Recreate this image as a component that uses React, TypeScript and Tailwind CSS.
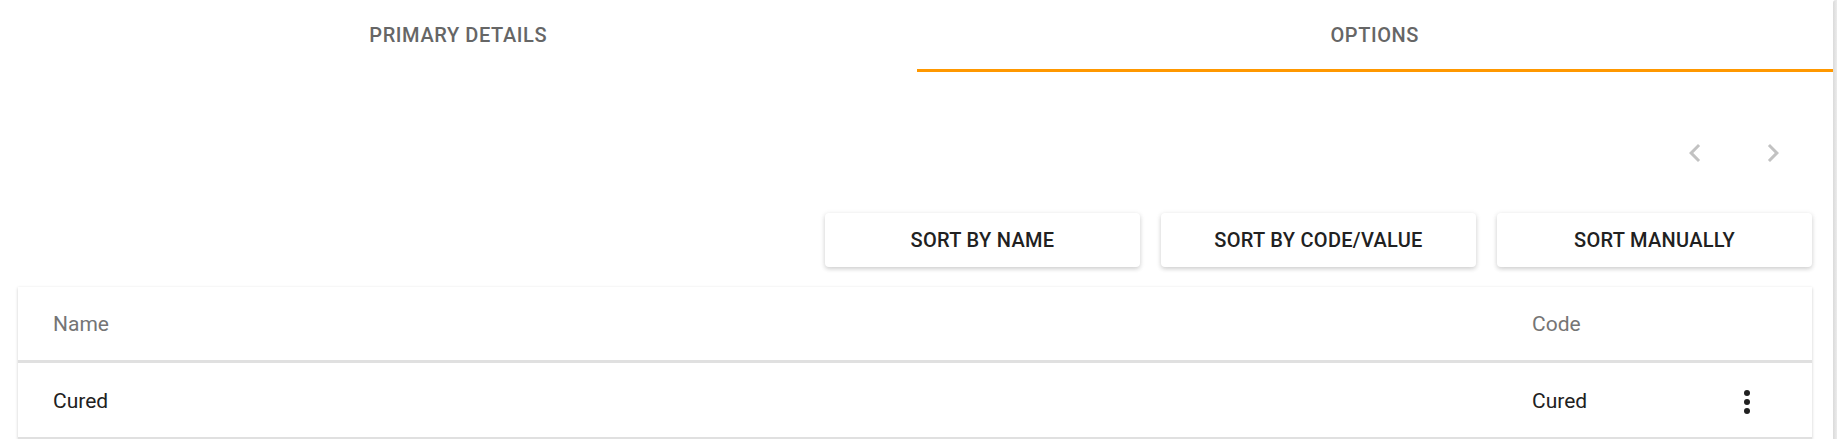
import {useState} from 'react';

type Option = {id: string; name: string; code: string};

const options: Option[] = [{id: '1', name: 'Cured', code: 'Cured'}];

function ChevronLeft() {
  return (
    <svg viewBox="0 0 24 24" className="h-[36px] w-[36px] fill-[#c2c2c2]">
      <path d="M15.41 7.41 14 6l-6 6 6 6 1.41-1.41L10.83 12z" />
    </svg>
  );
}

function ChevronRight() {
  return (
    <svg viewBox="0 0 24 24" className="h-[36px] w-[36px] fill-[#c2c2c2]">
      <path d="M10 6 8.59 7.41 13.17 12l-4.58 4.59L10 18l6-6z" />
    </svg>
  );
}

function MoreVert() {
  return (
    <svg viewBox="0 0 24 24" className="h-[36px] w-[36px] fill-[#212121]">
      <circle cx="12" cy="6" r="2" />
      <circle cx="12" cy="12" r="2" />
      <circle cx="12" cy="18" r="2" />
    </svg>
  );
}

function SortButton({label}: {label: string}) {
  return (
    <button className="h-[54px] w-[315px] rounded-[4px] bg-white text-[20px] font-medium tracking-[0.3px] text-[#212121] shadow-[0_2px_4px_rgba(0,0,0,0.14),0_1px_6px_rgba(0,0,0,0.08)]">
      {label}
    </button>
  );
}

export default function App() {
  const [tab, setTab] = useState(1);
  const tabs = ['PRIMARY DETAILS', 'OPTIONS'];

  return (
    <div className="flex min-h-[439px] w-full bg-white font-['Roboto',sans-serif]">
      <div className="flex w-[1833px] flex-col">
        <div className="grid grid-cols-2">
          {tabs.map((t, i) => (
            <button
              key={t}
              onClick={() => setTab(i)}
              className={
                i === tab
                  ? 'h-[72px] border-b-[3px] border-[#ff9800] text-[20px] font-medium tracking-[0.6px] text-[#666]'
                  : 'h-[72px] border-b-[3px] border-transparent text-[20px] font-medium tracking-[0.6px] text-[#666]'
              }>
              {t}
            </button>
          ))}
        </div>

        <div className="flex justify-end gap-[42px] pr-[42px] pt-[63px]">
          <ChevronLeft />
          <ChevronRight />
        </div>

        <div className="flex justify-end gap-[21px] pr-[21px] pt-[42px]">
          <SortButton label="SORT BY NAME" />
          <SortButton label="SORT BY CODE/VALUE" />
          <SortButton label="SORT MANUALLY" />
        </div>

        <div className="mt-[20px] ml-[18px] mr-[21px] bg-white shadow-[0_1px_3px_rgba(0,0,0,0.2)]">
          <div className="flex h-[76px] items-center border-b-[3px] border-[#e0e0e0] pt-[3px] text-[21px] text-[#757575]">
            <div className="flex-1 pl-[35px]">Name</div>
            <div className="w-[197px]">Code</div>
            <div className="w-[83px]" />
          </div>
          {options.map((o) => (
            <div
              key={o.id}
              className="flex h-[76px] items-center border-b-[2px] border-[#e0e0e0] pt-[3px] text-[21px] text-[#212121]">
              <div className="flex-1 pl-[35px]">{o.name}</div>
              <div className="w-[197px]">{o.code}</div>
              <div className="flex w-[83px]">
                <MoreVert />
              </div>
            </div>
          ))}
        </div>
      </div>
      <div className="w-[4px] rounded-tl-[3px] bg-gradient-to-r from-[#dadada] to-[#ececec]" />
    </div>
  );
}
